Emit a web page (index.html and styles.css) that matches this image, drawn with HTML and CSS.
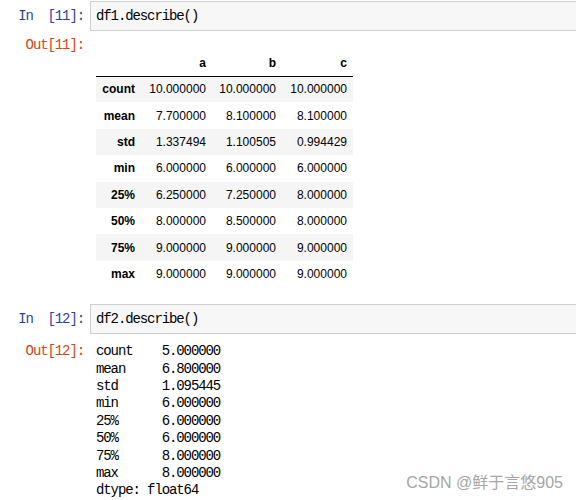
FILE: index.html
```html
<!DOCTYPE html>
<html>
<head>
<meta charset="utf-8">
<link rel="stylesheet" href="styles.css">
</head>
<body>
<div class="nb">
  <div class="cell cell-first">
    <div class="row input-row">
      <div class="prompt in-prompt">In  [11]:</div>
      <div class="code-box"><span class="code">df1.describe()</span></div>
    </div>
    <div class="row output-row">
      <div class="prompt out-prompt">Out[11]:</div>
      <div class="output">
        <table class="df">
          <thead>
            <tr><th class="c-idx"></th><th class="c-a">a</th><th class="c-b">b</th><th class="c-c">c</th></tr>
          </thead>
          <tbody>
            <tr><th>count</th><td>10.000000</td><td>10.000000</td><td>10.000000</td></tr>
            <tr><th>mean</th><td>7.700000</td><td>8.100000</td><td>8.100000</td></tr>
            <tr><th>std</th><td>1.337494</td><td>1.100505</td><td>0.994429</td></tr>
            <tr><th>min</th><td>6.000000</td><td>6.000000</td><td>6.000000</td></tr>
            <tr><th>25%</th><td>6.250000</td><td>7.250000</td><td>8.000000</td></tr>
            <tr><th>50%</th><td>8.000000</td><td>8.500000</td><td>8.000000</td></tr>
            <tr><th>75%</th><td>9.000000</td><td>9.000000</td><td>9.000000</td></tr>
            <tr><th>max</th><td>9.000000</td><td>9.000000</td><td>9.000000</td></tr>
          </tbody>
        </table>
      </div>
    </div>
  </div>
  <div class="cell cell-second">
    <div class="row input-row">
      <div class="prompt in-prompt">In  [12]:</div>
      <div class="code-box"><span class="code">df2.describe()</span></div>
    </div>
    <div class="row output-row2">
      <div class="prompt out-prompt">Out[12]:</div>
      <pre class="series">count    5.000000
mean     6.800000
std      1.095445
min      6.000000
25%      6.000000
50%      6.000000
75%      8.000000
max      8.000000
dtype: float64</pre>
    </div>
  </div>
  <div class="watermark">CSDN @鲜于言悠905</div>
</div>
</body>
</html>
```

FILE: styles.css
```css
html, body {
  margin: 0;
  padding: 0;
  background: #ffffff;
  overflow: hidden;
}

.nb {
  position: relative;
  width: 576px;
  height: 500px;
}

.cell-first {
  padding-top: 1px;
}

.cell-second {
  margin-top: 17px;
}

.row {
  display: flex;
  align-items: flex-start;
}

.prompt {
  width: 84px;
  padding-right: 6px;
  flex: none;
  text-align: right;
  white-space: pre;
  font-family: "Liberation Mono", monospace;
  font-size: 14px;
  letter-spacing: -1.1px;
  line-height: 17px;
}

.in-prompt {
  color: #303f9f;
  padding-top: 7px;
}

.out-prompt {
  color: #d84315;
}

.code-box {
  flex: 1;
  height: 28px;
  background: #f7f7f7;
  border: 1px solid #cfcfcf;
  border-right: none;
  padding-left: 5px;
  display: flex;
  align-items: center;
}

.code {
  font-family: "Liberation Mono", monospace;
  font-size: 14px;
  letter-spacing: -1.1px;
  color: #000;
  white-space: pre;
}

.output-row {
  margin-top: 6px;
}

.output {
  padding-left: 6px;
  padding-top: 14px;
}

.df {
  border-collapse: collapse;
  border-spacing: 0;
  font-family: "Liberation Sans", Arial, sans-serif;
  font-size: 12px;
  color: #000;
}

.df th, .df td {
  padding: 0 6px;
  text-align: right;
  white-space: nowrap;
  box-sizing: border-box;
}

.df thead tr {
  height: 25px;
}

.df thead th {
  border-bottom: 1px solid #000;
  font-weight: bold;
}

.df tbody tr {
  height: 26.4px;
}

.df tbody th {
  font-weight: bold;
}

.df tbody tr:nth-child(odd) {
  background: #f5f5f5;
}

.c-idx { width: 45px; }
.c-a { width: 71px; }
.c-b { width: 70px; }
.c-c { width: 71px; }

.output-row2 {
  margin-top: 9px;
}

.output-row2 .out-prompt {
  line-height: 17.4px;
}

.series {
  margin: 0;
  padding-left: 6px;
  font-family: "Liberation Mono", monospace;
  font-size: 14px;
  letter-spacing: -1.1px;
  line-height: 17.4px;
  color: #000;
}

.watermark {
  position: absolute;
  right: 13px;
  bottom: 7px;
  font-family: "Liberation Sans", "Noto Sans CJK SC", sans-serif;
  font-size: 16px;
  color: #a6a6a6;
  white-space: nowrap;
}
```
